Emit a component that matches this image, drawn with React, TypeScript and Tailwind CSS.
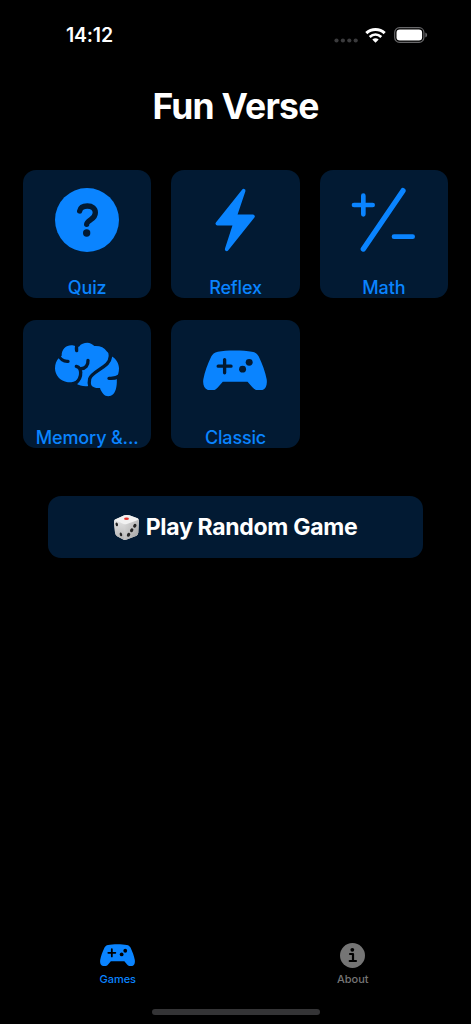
import type { ReactNode } from 'react';

/**
 * @file App.tsx
 * @overview Home screen of the Fun Verse game collection.
 */

const NAVY = '#021a33';

function QuizIcon() {
  return (
    <svg viewBox="0 0 192 192" className="size-16" fill="none">
      <circle cx="96" cy="96" r="96" fill="currentColor" />
      <path
        d="M74 69C76 59 85 54 97 54C112 54 121 62 121 74C121 84 115 90 107 95C98 101 95 104 95 109"
        stroke={NAVY}
        strokeWidth="16"
        strokeLinecap="round"
      />
      <circle cx="95" cy="135" r="11" fill={NAVY} />
    </svg>
  );
}

function ReflexIcon() {
  return (
    <svg viewBox="0 0 192 192" className="size-16">
      <path
        d="M122 8L43 107H96L71 184L150 85H96Z"
        fill="currentColor"
        stroke="currentColor"
        strokeWidth="11"
        strokeLinejoin="round"
      />
    </svg>
  );
}

function MathIcon() {
  return (
    <svg
      viewBox="3 0 192 192"
      className="size-16 overflow-visible"
      fill="none"
      stroke="currentColor"
      strokeWidth="14"
      strokeLinecap="round"
    >
      <path d="M9 51H65M37 23V79M129 146H185" />
      <path d="M156 8L37 183" strokeWidth="16" />
    </svg>
  );
}

function BrainIcon() {
  return (
    <svg viewBox="105 69 192 192" className="size-16" fill="none">
      <path
        d="M105 160C105 147 109 136 117 128L125 122C125 102 138 91 154 91C159 91 162 92 166 93L177 95C183 86 192 83 202 83C210 83 217 87 223 93C240 92 253 97 260 109L277 125C290 133 297 147 297 160C297 172 294 180 290 187C292 208 289 228 280 237C270 247 257 245 250 237C245 231 242 226 240 219C228 220 218 217 212 209L205 213C190 215 178 211 169 206L172 194C163 201 150 203 140 201C120 198 105 180 105 160Z"
        fill="currentColor"
      />
      <g stroke={NAVY} strokeWidth="10" strokeLinecap="round" strokeLinejoin="round">
        <path d="M116 118C119 132 131 140 144 139" />
        <path d="M173 84C169 94 168 100 170 107" />
        <path d="M204 136C205 151 196 161 183 161M169 154C177 156 182 163 182 173C183 187 177 197 165 207" />
        <path d="M270 112C274 128 268 143 251 155C233 168 213 178 209 191C207 199 207 207 210 217" />
        <path d="M267 190C278 191 290 189 300 182" />
      </g>
    </svg>
  );
}

function GamepadIcon({ className, hole }: { className: string; hole: string }) {
  return (
    <svg viewBox="105 102 194 124" className={className} fill="none">
      <path
        d="M150 107C175 102 228 102 253 107C265 109 270 114 274 122C285 145 294 169 298 191C301 212 292 225 276 225C266 225 260 221 254 214L240 198H165L151 214C145 221 140 225 130 225C112 225 103 212 106 191C110 169 119 145 130 122C134 114 139 109 150 107Z"
        fill="currentColor"
      />
      <path
        d="M151 151H190M170.500 131V171"
        stroke={hole}
        strokeWidth="10"
        strokeLinecap="round"
      />
      <circle cx="245" cy="139.500" r="10.500" fill={hole} />
      <circle cx="225" cy="160" r="10.500" fill={hole} />
    </svg>
  );
}

function DiceIcon() {
  return (
    <svg viewBox="0 0 72 72" className="size-[25px]">
      <defs>
        <linearGradient id="left" x1="0" y1="0" x2="0" y2="1">
          <stop offset="0" stopColor="#e4e4e4" />
          <stop offset="1" stopColor="#b4b4b4" />
        </linearGradient>
        <linearGradient id="right" x1="0" y1="0" x2="1" y2="1">
          <stop offset="0" stopColor="#dedede" />
          <stop offset="1" stopColor="#a2a2a2" />
        </linearGradient>
      </defs>
      <path d="M3 13Q0 15 0 21L3 51Q4 57 9 61L25 70Q29 73 33 72L65 60Q69 57 70 51L72 17Q72 11 67 9L44 1Q37-1 30 1Z" fill="#d4d4d4" />
      <path d="M2 14L30 26L30 72L9 61Q4 57 3 51L0 21Q0 16 2 14Z" fill="url(#left)" />
      <path d="M30 26L71 12L70 51Q69 57 65 60L33 72Q29 72 29 66Z" fill="url(#right)" />
      <path d="M3 13L30 1Q37-1 44 1L68 9Q73 12 67 15L37 26Q31 28 26 25L4 16Q1 15 3 13Z" fill="#f1f1f1" />
      <ellipse cx="36" cy="11" rx="7" ry="3.500" fill="#e9322c" />
      <g fill="#252525">
        <ellipse cx="8" cy="27" rx="3.500" ry="5.500" transform="rotate(-15 8 27)" />
        <ellipse cx="20" cy="56" rx="3.500" ry="5.500" transform="rotate(-15 20 56)" />
        <ellipse cx="60" cy="31" rx="4.500" ry="6" transform="rotate(28 60 31)" />
        <ellipse cx="51" cy="44" rx="4.500" ry="6" transform="rotate(28 51 44)" />
        <ellipse cx="42" cy="57" rx="4.500" ry="6" transform="rotate(28 42 57)" />
      </g>
    </svg>
  );
}

function StatusBar() {
  return (
    <header className="flex h-[70px] items-center justify-between pr-[43px] pl-[66px]">
      <span className="pt-[2px] text-[19.500px] font-semibold tracking-[-0.2px]">14:12</span>
      <div className="flex items-center">
        <svg viewBox="0 0 24 5" className="mt-[10px] mr-[7px] h-[5px] w-6" fill="#3b3b3d">
          <circle cx="2.500" cy="2.500" r="2.100" />
          <circle cx="8.900" cy="2.500" r="2.100" />
          <circle cx="15.300" cy="2.500" r="2.100" />
          <circle cx="21.700" cy="2.500" r="2.100" />
        </svg>
        <svg viewBox="0 0 21 15" className="mr-2 h-[15px] w-[21px]" fill="none">
          <path d="M1.300 5.200C6.500.300 14.500.300 19.700 5.200" stroke="white" strokeWidth="3" />
          <path d="M4.700 8.900C8.200 5.800 12.800 5.800 16.300 8.900" stroke="white" strokeWidth="2.700" />
          <path d="M7.300 11.600Q10.500 9 13.700 11.600L10.500 14.800Z" fill="white" />
        </svg>
        <svg viewBox="0 0 34 16" className="h-4 w-[34px]" fill="none">
          <rect x=".7" y=".7" width="29.200" height="14.600" rx="4.700" stroke="#68686a" strokeWidth="1.200" />
          <rect x="2.500" y="2.500" width="25.600" height="11" rx="3.200" fill="white" />
          <path d="M31.300 5.500Q33.200 6.300 33.200 8T31.300 10.500Z" fill="#68686a" />
        </svg>
      </div>
    </header>
  );
}

function GameCard({ label, children }: { label: string; children: ReactNode }) {
  return (
    <button className="flex h-32 flex-col items-center rounded-[13px] bg-[#021a33] pt-[18px] text-[#0a84ff]">
      <span className="flex h-16 shrink-0 items-center">{children}</span>
      <span className="mt-[23px] h-[23px] text-[18px] leading-[26px] font-medium tracking-[-0.15px] whitespace-nowrap">
        {label}
      </span>
    </button>
  );
}

export default function App() {
  return (
    <div className="flex h-[1024px] w-[471px] flex-col bg-black font-['Inter',sans-serif] text-white">
      <StatusBar />
      <h1 className="mt-[13px] text-center text-[35.500px] leading-[48px] font-bold tracking-[-0.8px]">
        Fun Verse
      </h1>

      <main className="mt-[39px] px-[23px]">
        <div className="grid grid-cols-3 gap-x-5 gap-y-[22px]">
          <GameCard label="Quiz">
            <QuizIcon />
          </GameCard>
          <GameCard label="Reflex">
            <ReflexIcon />
          </GameCard>
          <GameCard label="Math">
            <MathIcon />
          </GameCard>
          <GameCard label="Memory &...">
            <BrainIcon />
          </GameCard>
          <GameCard label="Classic">
            <GamepadIcon className="w-16" hole={NAVY} />
          </GameCard>
        </div>
        <button className="mx-[25px] mt-12 flex h-[62px] w-[375px] items-center justify-center gap-[7px] rounded-[13px] bg-[#021a33] text-[23px] font-bold tracking-[-0.3px]">
          <DiceIcon />
          <span>Play Random Game</span>
        </button>
      </main>

      <nav className="mt-auto grid h-[67px] grid-cols-2 text-[11px] leading-4 font-medium">
        <button className="flex flex-col items-center text-[#0a84ff]">
          <span className="flex h-7 items-center">
            <GamepadIcon className="w-[35px]" hole="#000000" />
          </span>
          <span className="mt-[2px]">Games</span>
        </button>
        <button className="flex flex-col items-center pr-px text-[#757575]">
          <span className="flex h-7 items-center">
            <svg viewBox="0 0 25 25" className="size-[25px]" fill="none">
              <circle cx="12.500" cy="12.500" r="12.500" fill="currentColor" />
              <circle cx="12.300" cy="6.800" r="1.900" fill="black" />
              <path d="M10 11H13V18M9.700 18H16" stroke="black" strokeWidth="2.200" strokeLinecap="round" strokeLinejoin="round" />
            </svg>
          </span>
          <span className="mt-[2px]">About</span>
        </button>
      </nav>
      <footer className="flex h-[16px] justify-center">
        <div className="mt-px h-[6px] w-[168px] rounded-full bg-[#343436]" />
      </footer>
    </div>
  );
}
